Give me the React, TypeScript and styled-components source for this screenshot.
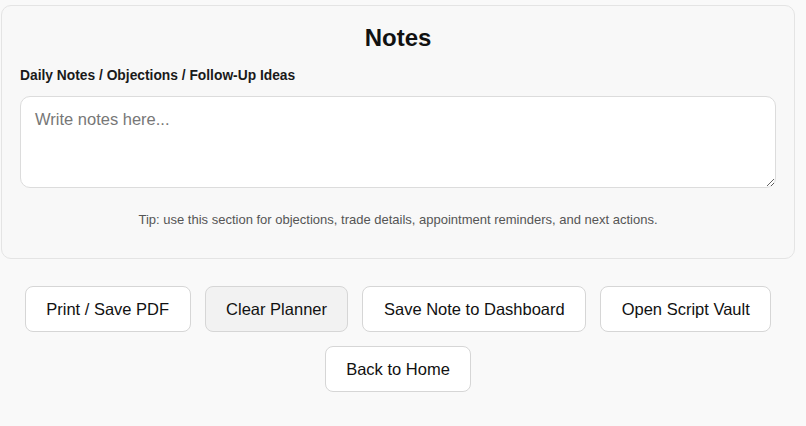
import React from "react";
import styled, { createGlobalStyle } from "styled-components";

const GlobalStyle = createGlobalStyle`
    html, body {
        margin: 0;
        padding: 0;
        background: #f9f9f9;
        font-family: "Liberation Sans", Arial, sans-serif;
        color: #111;
    }
`;

const Page = styled.div`
    width: 794px;
    padding: 5px 0 0 1px;
`;

const NotesCard = styled.section`
    display: flex;
    flex-direction: column;
    padding: 18px 18px 31px;
    background-color: #f8f8f8;
    border: 1px solid #e4e4e4;
    border-radius: 10px;
`;

const Title = styled.h2`
    margin: 0 0 16px;
    font-size: 24px;
    line-height: 28px;
    font-weight: 700;
    text-align: center;
    color: #111;
`;

const Label = styled.label`
    font-size: 13.8px;
    line-height: 15px;
    font-weight: 700;
    color: #1a1a1a;
    margin-bottom: 13px;
`;

const NotesArea = styled.textarea`
    box-sizing: border-box;
    width: 100%;
    height: 92px;
    padding: 12px 14px;
    font-family: "Liberation Sans", Arial, sans-serif;
    font-size: 16.5px;
    line-height: 20px;
    color: #222;
    background: #fff;
    border: 1px solid #dcdcdc;
    border-radius: 10px;
    resize: vertical;
    outline: none;

    &::placeholder {
        color: #777;
    }
`;

const Tip = styled.p`
    margin: 24px 0 0;
    font-size: 13px;
    line-height: 15px;
    text-align: center;
    color: #555;
`;

const Actions = styled.div`
    display: flex;
    flex-wrap: wrap;
    justify-content: center;
    gap: 14px;
    row-gap: 14px;
    margin-top: 27px;
`;

const ActionButton = styled.button<{ $muted?: boolean }>`
    height: 46px;
    padding: 0 20.5px;
    font-family: "Liberation Sans", Arial, sans-serif;
    font-size: 16.5px;
    color: #111;
    background-color: ${(p) => (p.$muted ? "#f2f2f2" : "#fff")};
    border: 1px solid #d6d6d6;
    border-radius: 8px;
    cursor: pointer;
`;

function App() {
    return (
        <>
            <GlobalStyle />
            <Page>
                <NotesCard>
                    <Title>Notes</Title>
                    <Label htmlFor="notes">
                        Daily Notes / Objections / Follow-Up Ideas
                    </Label>
                    <NotesArea id="notes" placeholder="Write notes here..." />
                    <Tip>
                        Tip: use this section for objections, trade details,
                        appointment reminders, and next actions.
                    </Tip>
                </NotesCard>
                <Actions>
                    <ActionButton>Print / Save PDF</ActionButton>
                    <ActionButton $muted>Clear Planner</ActionButton>
                    <ActionButton>Save Note to Dashboard</ActionButton>
                    <ActionButton>Open Script Vault</ActionButton>
                    <ActionButton>Back to Home</ActionButton>
                </Actions>
            </Page>
        </>
    );
}

export default App;
